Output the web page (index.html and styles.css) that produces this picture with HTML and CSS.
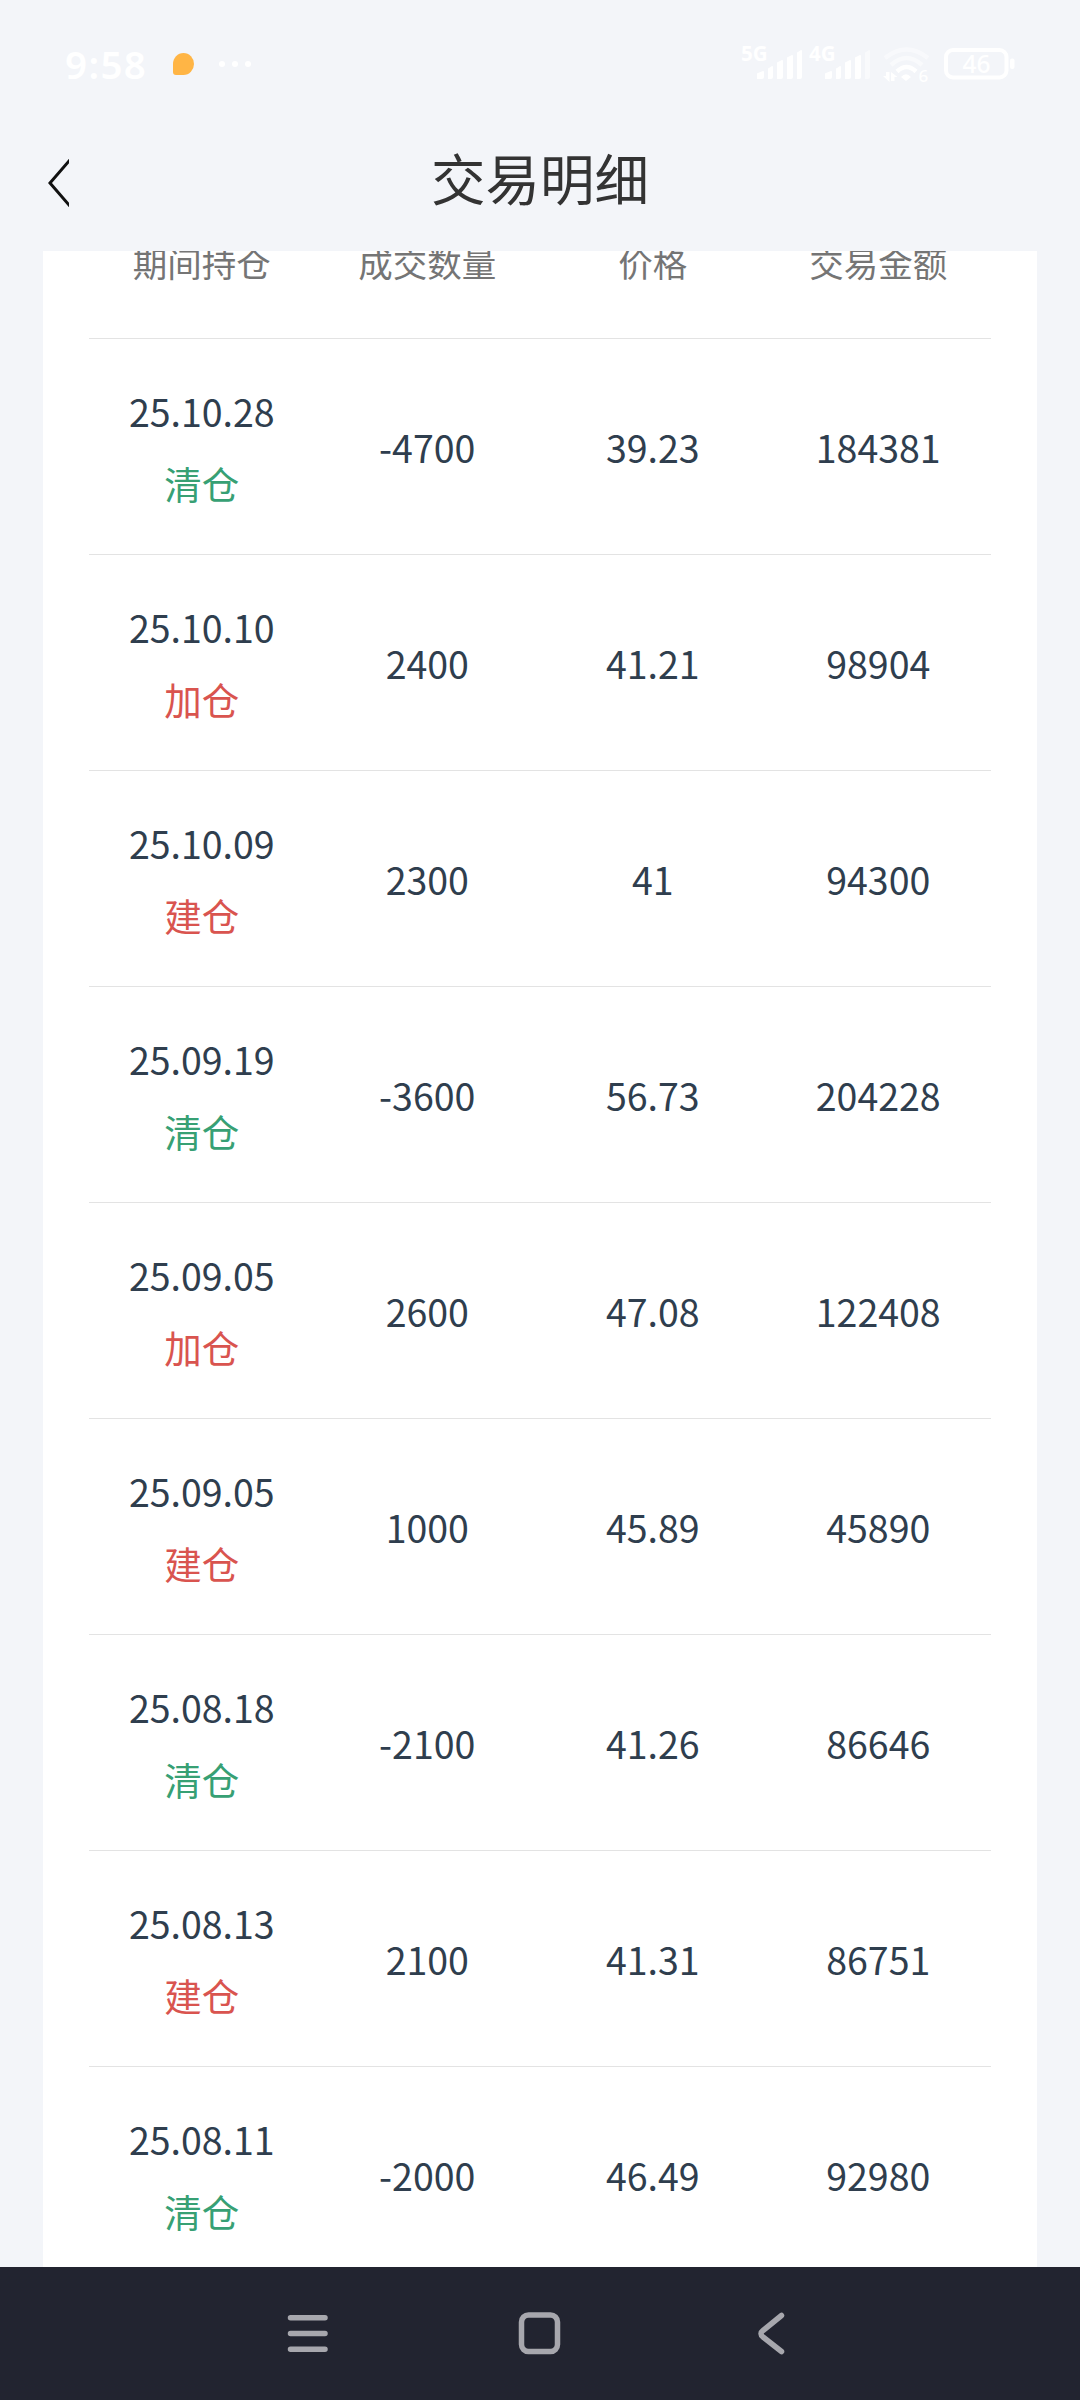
FILE: index.html
```html
<!DOCTYPE html>
<html lang="zh-CN">
<head>
<meta charset="utf-8">
<title>交易明细</title>
<link rel="stylesheet" href="styles.css">
</head>
<body>
<div class="screen">
  <div class="status">
    <div class="status-left">
      <span class="clock">9:58</span>
      <span class="bubble"></span>
      <span class="dots"><i></i><i></i><i></i></span>
    </div>
    <svg class="status-icons" width="280" height="80" viewBox="740 24 280 80" fill="#fff">
      <text x="741" y="61" font-size="20.5" font-weight="700">5G</text>
      <path d="M757 79v-5q0-1 1-1l5-2q1 0 1 1v5q0 2-2 2zM768 79V69q0-1 1-1l3-2q1 0 1 1v10q0 2-2 2zM777 79V63q0-1 1-1l4-2q1 0 1 1v16q0 2-2 2zM787 79V58q0-1 1-1l4-2q1 0 1 1v21q0 2-2 2zM797 79V53q0-1 1-1l3-2q1 0 1 1v26q0 2-2 2z"/>
      <text x="809" y="61" font-size="20.5" font-weight="700">4G</text>
      <path d="M825 79v-5q0-1 1-1l5-2q1 0 1 1v5q0 2-2 2zM836 79V69q0-1 1-1l3-2q1 0 1 1v10q0 2-2 2zM845 79V63q0-1 1-1l4-2q1 0 1 1v16q0 2-2 2zM855 79V58q0-1 1-1l4-2q1 0 1 1v21q0 2-2 2z"/>
      <path d="M865 79V53q0-1 1-1l3-2q1 0 1 1v26q0 2-2 2z" opacity=".5"/>
      <g fill="none" stroke="#fff" stroke-width="4.5">
        <path d="M885 58q21.500-17 43 0" opacity=".45"/>
        <path d="M891 65q15.500-14 31 0" opacity=".5"/>
        <path d="M897 71.500q9.500-9 19 0"/>
      </g>
      <path d="M901 77q5-5.500 10 0l-5 4zM883 76h3v-4h3.500v10zM891 72l6.500 5h-3v4H891z"/>
      <text x="918.500" y="82" font-size="17" font-weight="500">6</text>
      <rect x="946" y="50" width="60.500" height="27.500" rx="7" fill="none" stroke="#fff" stroke-width="4"/>
      <rect x="1010" y="58.500" width="4.500" height="10.500" rx="2"/>
      <text x="962.500" y="73" font-size="24.500" font-weight="500">46</text>
    </svg>
  </div>

  <header class="titlebar">
    <svg class="back" width="69" height="60" viewBox="0 152 69 60" fill="none" stroke="#111" stroke-width="3"><path d="M72 157.500 50 183l22 25.500"/></svg>
    <h1>交易明细</h1>
  </header>

  <main class="card">
    <div class="table">
      <div class="row head"><span>期间持仓</span><span>成交数量</span><span>价格</span><span>交易金额</span></div>
      <div class="row"><div>25.10.28<b class="sell">清仓</b></div><span>-4700</span><span>39.23</span><span>184381</span></div>
      <div class="row"><div>25.10.10<b class="buy">加仓</b></div><span>2400</span><span>41.21</span><span>98904</span></div>
      <div class="row"><div>25.10.09<b class="buy">建仓</b></div><span>2300</span><span>41</span><span>94300</span></div>
      <div class="row"><div>25.09.19<b class="sell">清仓</b></div><span>-3600</span><span>56.73</span><span>204228</span></div>
      <div class="row"><div>25.09.05<b class="buy">加仓</b></div><span>2600</span><span>47.08</span><span>122408</span></div>
      <div class="row"><div>25.09.05<b class="buy">建仓</b></div><span>1000</span><span>45.89</span><span>45890</span></div>
      <div class="row"><div>25.08.18<b class="sell">清仓</b></div><span>-2100</span><span>41.26</span><span>86646</span></div>
      <div class="row"><div>25.08.13<b class="buy">建仓</b></div><span>2100</span><span>41.31</span><span>86751</span></div>
      <div class="row"><div>25.08.11<b class="sell">清仓</b></div><span>-2000</span><span>46.49</span><span>92980</span></div>
    </div>
  </main>

  <nav class="navbar">
    <svg width="1080" height="133" viewBox="0 2267 1080 133" fill="none" stroke="#a7a7ad" stroke-width="5.500" stroke-linecap="round" stroke-linejoin="round">
      <path d="M290.500 2317.700h34.500M290.500 2333.500h34.500M290.500 2349.200h34.500"/>
      <rect x="521.500" y="2315" width="36" height="36.500" rx="7"/>
      <path d="M781.500 2315.500 763 2330.500q-4 3 0 6.500l18.500 14.500"/>
    </svg>
  </nav>
</div>
</body>
</html>
```

FILE: styles.css
```css
* { box-sizing: border-box; }
body {
  margin: 0;
  background: #f3f5f9;
  font-family: "Noto Sans CJK SC", "Noto Sans", sans-serif;
}
.screen {
  width: 1080px;
  height: 2400px;
  display: flex;
  flex-direction: column;
  overflow: hidden;
}
.status {
  height: 128px;
  padding: 0 60px 0 65px;
  display: flex;
  justify-content: space-between;
  align-items: center;
  color: #fff;
}
.status-left { display: flex; align-items: center; }
.clock {
  width: 108px;
  font: 600 38.5px/50px "Noto Sans", sans-serif;
  letter-spacing: 1.4px;
}
.bubble {
  width: 21px;
  height: 22px;
  background: #ffb545;
  border-radius: 50% 50% 50% 3px;
}
.dots { display: flex; gap: 7px; margin-left: 25px; }
.dots i { width: 6px; height: 6px; border-radius: 50%; background: #fff; }
.status-icons { overflow: visible; font-family: "Noto Sans", sans-serif; }
.titlebar {
  height: 123px;
  padding-top: 24px;
  display: grid;
  grid-template-columns: 69px 1fr 69px;
  align-items: start;
}
.titlebar h1 {
  margin: -5px 0 0;
  font-size: 54.5px;
  font-weight: 400;
  line-height: 60px;
  text-align: center;
  color: #333;
}
.card {
  flex: 1;
  min-height: 0;
  margin: 0 43px;
  padding: 0 46px;
  background: #fff;
  overflow: hidden;
}
.table { margin-top: -67px; }
.row {
  height: 216px;
  display: grid;
  grid-template-columns: repeat(4, 1fr);
  align-items: center;
  text-align: center;
  border-bottom: 1px solid #e3e3e3;
  font-size: 37.5px;
  line-height: 72px;
  color: #2f3e4e;
}
.row.head {
  height: 155px;
  padding-top: 2px;
  font-size: 34.5px;
  color: #757575;
}
.row b { display: block; font-weight: 400; }
.sell { color: #37a074; }
.buy { color: #d9544f; }
.navbar {
  height: 133px;
  background: #222430;
}
.navbar svg { display: block; }
```
